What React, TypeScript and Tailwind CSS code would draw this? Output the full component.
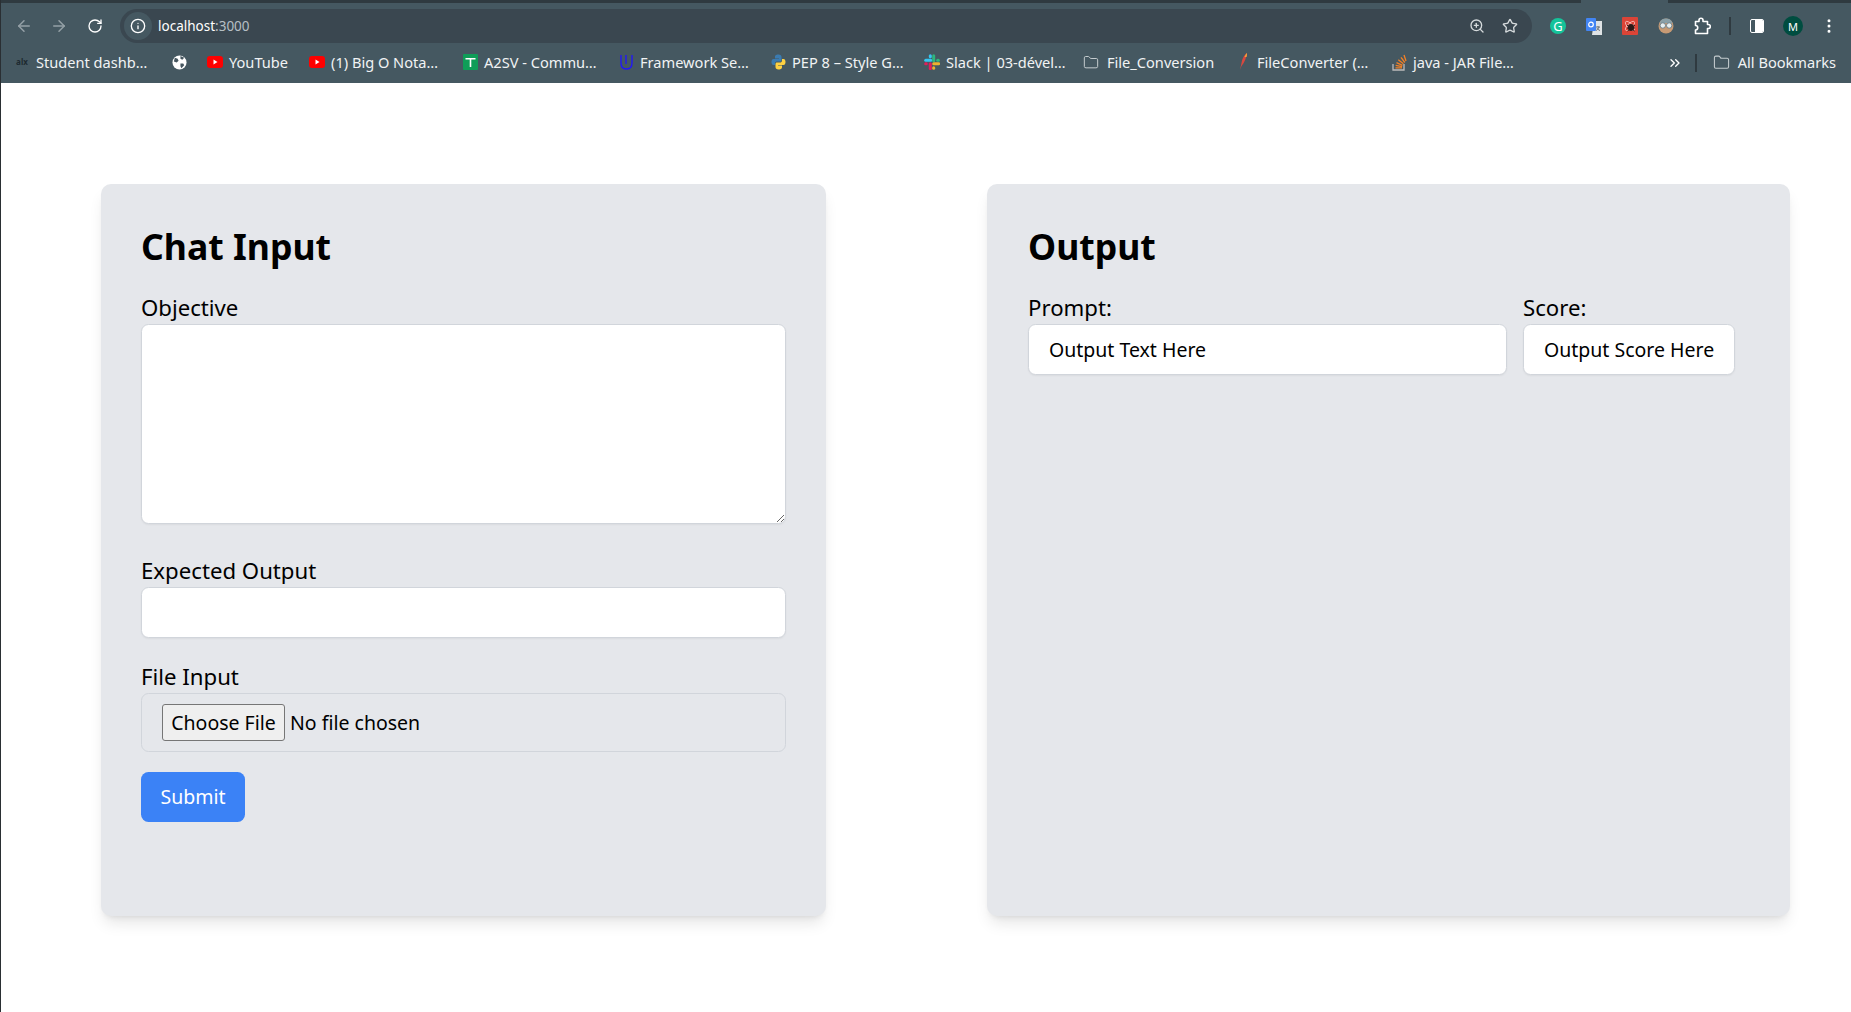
import React from 'react';
import { ArrowLeft, ArrowRight, RotateCw, Info, ZoomIn, Star, EllipsisVertical, ChevronsRight, Folder } from 'lucide-react';

const font = "font-['Noto_Sans',sans-serif]";

function Alx() {
  return <span className="w-[13px] text-center text-[8px] font-bold leading-none text-[#1d2a30]">alx</span>;
}

function Globe() {
  return (
    <svg width="15" height="15" viewBox="0 0 16 16">
      <circle cx="8" cy="8" r="7.500" fill="#fff" />
      <path d="M3 3l3 1 1 2-2 2-3-1zM9 9l3 0 1 2-3 3-1-2zM9 1l4 2-2 2-2-1z" fill="#46565f" />
    </svg>
  );
}

function YouTube() {
  return (
    <svg width="16" height="16" viewBox="0 0 16 16">
      <rect x="0" y="2" width="16" height="12" rx="3" fill="#f00" />
      <path d="M6.500 5.500l4 2.500-4 2.500z" fill="#fff" />
    </svg>
  );
}

function Sheet() {
  return (
    <svg width="15" height="16" viewBox="0 0 15 16">
      <rect width="15" height="16" rx="1" fill="#0f9d58" />
      <path d="M2.500 4h10v1.600H8.300V13H6.700V5.600H2.500z" fill="#fff" />
    </svg>
  );
}

function Udacity() {
  return (
    <svg width="15" height="16" viewBox="0 0 15 16" fill="none" stroke="#2015ff" strokeWidth="1.300">
      <path d="M2 1v8c0 4 2 6 5.500 6s5.500-2 5.500-6V1" />
      <path d="M7 1v9" />
    </svg>
  );
}

function Python() {
  return (
    <svg width="15" height="16" viewBox="0 0 15 16">
      <path d="M7.500 0.500C4.500 0.500 4 1.700 4 3v1.500h4V5H2.500C1 5 0.500 6.500 0.500 8S1 11 2.500 11H4V9.500C4 8 5 7.500 6 7.500h3c1 0 1.500-.7 1.500-1.500V3c0-1.500-1-2.500-3-2.500z" fill="#3b7bb0" />
      <path d="M7.500 15.500c3 0 3.500-1.200 3.500-2.500v-1.500H7V11h5.500c1.500 0 2-1.500 2-3s-.5-3-2-3H11v1.500C11 8 10 8.500 9 8.500H6c-1 0-1.500.7-1.500 1.500v3c0 1.500 1 2.500 3 2.500z" fill="#fed142" />
    </svg>
  );
}

function Slack() {
  return (
    <svg width="16" height="16" viewBox="0 0 16 16" strokeWidth="3" strokeLinecap="round" fill="none">
      <path d="M1.700 6.300h5" stroke="#36c5f0" />
      <path d="M6.300 1.700v1" stroke="#36c5f0" />
      <path d="M9.700 1.700v5" stroke="#2eb67d" />
      <path d="M13.700 6.300h.6" stroke="#2eb67d" />
      <path d="M9.700 9.700h5" stroke="#ecb22e" />
      <path d="M9.700 13.700v.6" stroke="#ecb22e" />
      <path d="M6.300 9.700v5" stroke="#e01e5a" />
      <path d="M1.700 9.700h.6" stroke="#e01e5a" />
    </svg>
  );
}

function Feather() {
  return (
    <svg width="9" height="18" viewBox="0 0 9 18">
      <path d="M8 0C5 2 3 6 2.500 10L1 17l1.500-4C5 10 7.500 5 8 0z" fill="#d8483f" />
      <path d="M8 0C7 1 6 2.500 5.500 4L7.500 4C8 2.500 8 1 8 0z" fill="#f2a33a" />
    </svg>
  );
}

function StackOverflow() {
  return (
    <svg width="15" height="18" viewBox="0 0 15 18" fill="none">
      <path d="M1 11v6h11v-6" stroke="#bcbbbb" strokeWidth="1.300" />
      <path d="M3.500 14.800h6.500M3.700 12.300l6.400 1.300M4.500 9.600l6 2.700M6.300 6.800l5.100 4M9 4.300l3.800 5.200M12 2l2 6" stroke="#f48024" strokeWidth="1.300" />
    </svg>
  );
}

function Translate() {
  return (
    <svg width="16" height="17" viewBox="0 0 16 17" className="ml-[20px]">
      <path d="M8 3h8v14H6z" fill="#dfe3e5" />
      <path d="M10 9h4M12 8v1M13 9c-.5 2-2 3-3 3.500M11 10c.5 1 1.500 2 3 2.500" stroke="#6b7278" strokeWidth="1" fill="none" />
      <rect width="10" height="13" rx="1" fill="#4285f4" />
      <circle cx="5" cy="6.500" r="2.300" fill="none" stroke="#fff" strokeWidth="1.200" />
    </svg>
  );
}

function BugIcon() {
  return (
    <svg width="16" height="18" viewBox="0 0 16 18" className="ml-[20px]">
      <rect width="16" height="18" rx="1" fill="#db4437" />
      <ellipse cx="8" cy="9" rx="6" ry="2.500" fill="none" stroke="#f6c7c2" strokeWidth=".8" transform="rotate(45 8 9)" />
      <ellipse cx="8" cy="9" rx="6" ry="2.500" fill="none" stroke="#f6c7c2" strokeWidth=".8" transform="rotate(-45 8 9)" />
      <ellipse cx="9" cy="10.500" rx="3" ry="3.500" fill="#2b1a18" />
      <path d="M5 8l2 1.500M5 11h2M5.500 14l2-1.500M13 8l-2 1.500M13 11h-2M12.500 14l-2-1.500" stroke="#2b1a18" strokeWidth="1" />
    </svg>
  );
}

function FaceIcon() {
  return (
    <svg width="16" height="16" viewBox="0 0 16 16" className="ml-[20px]">
      <circle cx="8" cy="8" r="7.500" fill="#c79a74" />
      <path d="M1.500 5a7 7 0 0 1 13 0z" fill="#8aa0a8" />
      <circle cx="4.800" cy="7.500" r="2.700" fill="#e6eef0" stroke="#5d7480" strokeWidth=".8" />
      <circle cx="11.200" cy="7.500" r="2.700" fill="#e6eef0" stroke="#5d7480" strokeWidth=".8" />
    </svg>
  );
}

function Extensions() {
  return (
    <svg width="17" height="18" viewBox="0 0 17 18" fill="none" stroke="#fff" strokeWidth="1.600" className="ml-[20px]">
      <path d="M1.500 4.500H5V3.200a2 2 0 0 1 4 0v1.300h4.500V7.500h.8a2 2 0 0 1 0 4h-.8v5H1.500v-3.500a2.200 2.200 0 0 0 0-4.500z" strokeLinejoin="round" />
    </svg>
  );
}

type Bookmark = { icon: React.ReactNode; label?: string; width: string; gap?: string };

const bookmarks: Bookmark[] = [
  { icon: <Alx />, label: 'Student dashb…', width: 'w-[157px]' },
  { icon: <Globe />, width: 'w-[36px]' },
  { icon: <YouTube />, label: 'YouTube', width: 'w-[102px]' },
  { icon: <YouTube />, label: '(1) Big O Nota…', width: 'w-[153px]' },
  { icon: <Sheet />, label: 'A2SV - Commu…', width: 'w-[156px]' },
  { icon: <Udacity />, label: 'Framework Se…', width: 'w-[152px]' },
  { icon: <Python />, label: 'PEP 8 – Style G…', width: 'w-[154px]' },
  { icon: <Slack />, label: 'Slack | 03-dével…', width: 'w-[159px]' },
  { icon: <Folder size={17} strokeWidth={1.500} className="text-[#c4cbce]" />, label: 'File_Conversion', width: 'w-[152px]', gap: 'gap-[8px]' },
  { icon: <Feather />, label: 'FileConverter (…', width: 'w-[156px]' },
  { icon: <StackOverflow />, label: 'java - JAR File…', width: 'w-[140px]' },
];

function ChromeBar() {
  return (
    <header className="flex flex-col bg-[#455861]">
      <div className="flex h-[3px]">
        <div className="w-[1580px] bg-[#2f3a40]" />
        <div className="ml-[87px] flex-1 bg-[#2f3a40]" />
      </div>
      <div className="flex h-[40px] items-center pl-[14px] pr-[10px] pt-[6px]">
        <ArrowLeft size={18} className="text-[#94a0a6]" />
        <ArrowRight size={18} className="ml-[17px] text-[#94a0a6]" />
        <RotateCw size={16} className="ml-[19px] text-white" />
        <div className="ml-[17px] flex h-[34px] w-[1412px] items-center rounded-full bg-[#3a4750] pl-[4px] pr-[14px]">
          <span className="flex h-[28px] w-[28px] items-center justify-center rounded-full bg-[#455861]">
            <Info size={16} className="text-white" />
          </span>
          <span className="ml-[6px] text-[13.500px] text-white">
            localhost<span className="text-[#b6bfc4]">:3000</span>
          </span>
          <ZoomIn size={16} className="ml-auto text-[#d5dadc]" />
          <Star size={16} className="ml-[17px] text-[#d5dadc]" />
        </div>
        <span className="ml-[18px] flex h-[16px] w-[16px] items-center justify-center rounded-full bg-[#15c39a] text-[13px] leading-none text-white">G</span>
        <Translate />
        <BugIcon />
        <FaceIcon />
        <Extensions />
        <div className="ml-[18px] h-[18px] w-[2px] bg-[#2f3a40]" />
        <span className="ml-[19px] flex h-[14px] w-[14px] overflow-hidden rounded-[2px] border border-white">
          <span className="w-1/3" />
          <span className="w-2/3 bg-white" />
        </span>
        <span className="ml-[19px] flex h-[20px] w-[20px] items-center justify-center rounded-full bg-[#004d40] text-[11px] leading-none text-white">M</span>
        <EllipsisVertical size={18} className="ml-[17px] text-white" />
      </div>
      <div className="flex h-[40px] items-center pb-[1px] pl-[13px] pr-[15px] text-[14.600px] text-[#f1f3f4]">
        {bookmarks.map((b, i) => (
          <div key={i} className={`flex items-center ${b.gap ?? 'gap-[6px]'} ${b.width}`}>
            <span className="flex w-[16px] shrink-0 justify-center">{b.icon}</span>
            {b.label && <span className="whitespace-nowrap">{b.label}</span>}
          </div>
        ))}
        <ChevronsRight size={16} className="ml-auto text-white" />
        <div className="ml-[12px] h-[18px] w-[2px] bg-[#2f3a40]" />
        <Folder size={17} strokeWidth={1.500} className="ml-[16px] text-[#c4cbce]" />
        <span className="ml-[8px]">All Bookmarks</span>
      </div>
    </header>
  );
}

function Label({ children }: { children: React.ReactNode }) {
  return <label className="block h-[30px] text-[22.200px] leading-[28px]">{children}</label>;
}

const fieldCls = 'block w-full rounded-[7.500px] border border-[#d1d5db] bg-white shadow-[0_1px_2px_0_rgba(0,0,0,0.05)]';

function OutputBox({ children }: { children: React.ReactNode }) {
  return <div className={`${fieldCls} h-[51px] whitespace-nowrap px-[20px] text-[19.500px] leading-[49px]`}>{children}</div>;
}

export default function App() {
  return (
    <div className={`flex h-[1012px] flex-col overflow-hidden border-l border-l-[#2a2f33] bg-white text-black ${font}`}>
      <ChromeBar />
      <main className="flex gap-[161px] pl-[100px] pt-[101px]">
        <section className="h-[732px] w-[725px] rounded-[10px] bg-[#e5e7eb] p-[40px] shadow-lg">
          <h2 className="mb-[25px] text-[35.600px] font-bold leading-[45px]">Chat Input</h2>
          <Label>Objective</Label>
          <textarea className={`${fieldCls} h-[200px]`} />
          <div className="mt-[33px]">
            <Label>Expected Output</Label>
            <input className={`${fieldCls} h-[51px]`} />
          </div>
          <div className="mt-[25px]">
            <Label>File Input</Label>
            <input
              type="file"
              className="block h-[59px] w-full rounded-[7.500px] border border-[#d1d5db] px-[20px] py-[10px] text-[19.500px] file:mr-[5px] file:h-[37px] file:w-[123px] file:rounded-[3px] file:border file:border-[#767676] file:bg-[#efefef] file:px-0"
            />
          </div>
          <button className="mt-[20px] h-[50px] w-[104px] rounded-[7.500px] bg-[#3b82f6] text-[19.500px] text-white">Submit</button>
        </section>
        <section className="h-[732px] w-[803px] rounded-[10px] bg-[#e5e7eb] py-[40px] pl-[41px] pr-[40px] shadow-lg">
          <h2 className="mb-[25px] text-[35.600px] font-bold leading-[45px]">Output</h2>
          <div className="flex gap-[16px]">
            <div className="w-[479px]">
              <Label>Prompt:</Label>
              <OutputBox>Output Text Here</OutputBox>
            </div>
            <div className="w-[212px]">
              <Label>Score:</Label>
              <OutputBox>Output Score Here</OutputBox>
            </div>
          </div>
        </section>
      </main>
    </div>
  );
}
